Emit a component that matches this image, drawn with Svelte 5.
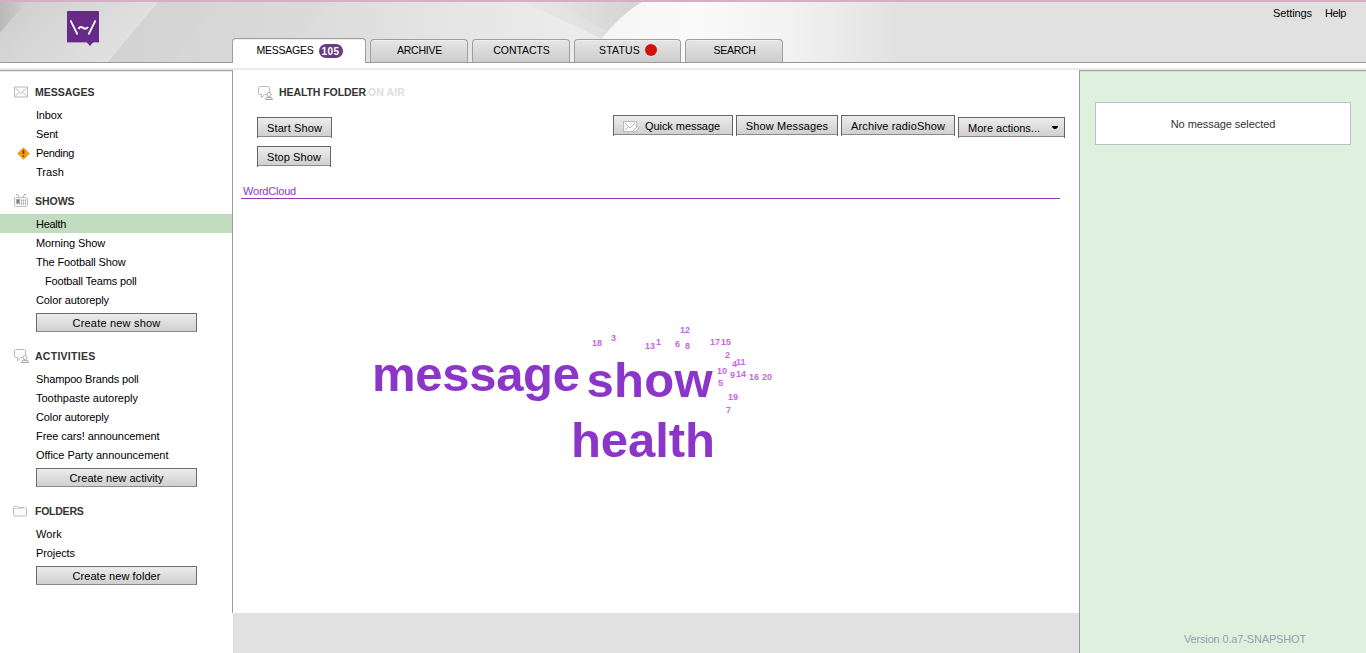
<script>
  const sections = [
    {
      title: 'MESSAGES', icon: 'mail', tw: 59.5,
      rows: [
        { t: 'Inbox', w: 26 }, { t: 'Sent', w: 22 },
        { t: 'Pending', w: 38, warn: true }, { t: 'Trash', w: 28 }
      ]
    },
    {
      title: 'SHOWS', icon: 'radio', tw: 39.5, button: 'Create new show', bw: 88,
      rows: [
        { t: 'Health', w: 30, active: true }, { t: 'Morning Show', w: 69 },
        { t: 'The Football Show', w: 89.5 }, { t: 'Football Teams poll', w: 91.5, sub: true },
        { t: 'Color autoreply', w: 73 }
      ]
    },
    {
      title: 'ACTIVITIES', icon: 'chat', tw: 60.5, button: 'Create new activity', bw: 94,
      rows: [
        { t: 'Shampoo Brands poll', w: 102.5 }, { t: 'Toothpaste autoreply', w: 102 },
        { t: 'Color autoreply', w: 73 }, { t: 'Free cars! announcement', w: 123.5 },
        { t: 'Office Party announcement', w: 132.5 }
      ]
    },
    {
      title: 'FOLDERS', icon: 'folder', tw: 48.5, button: 'Create new folder', bw: 88,
      rows: [{ t: 'Work', w: 26 }, { t: 'Projects', w: 39 }]
    }
  ];

  const tabs = [
    { t: 'MESSAGES', w: 57, width: 134, badge: '105', active: true },
    { t: 'ARCHIVE', w: 45, width: 98 },
    { t: 'CONTACTS', w: 56.5, width: 98 },
    { t: 'STATUS', w: 41, width: 107, dot: true },
    { t: 'SEARCH', w: 42, width: 98 }
  ];

  const big = [
    { t: 'message', x: 139, y: 192, w: 208 },
    { t: 'show', x: 353.5, y: 198, w: 126 },
    { t: 'health', x: 338, y: 258, w: 144 }
  ];
  const small = [
    ['18', 359, 147], ['3', 378, 142], ['13', 412, 150], ['1', 423, 146],
    ['12', 447, 134], ['6', 442, 148], ['8', 452, 150], ['17', 477, 146],
    ['15', 488, 146], ['2', 492, 159], ['4', 499, 168], ['11', 503, 166],
    ['10', 484, 175], ['9', 497, 179], ['14', 503, 178], ['16', 516, 181],
    ['20', 529, 181], ['5', 485, 187], ['19', 495, 201], ['7', 493, 214]
  ];

  // Spreads letters evenly so that a label takes up its set width.
  function fit(node, width) {
    const natural = node.getBoundingClientRect().width;
    const gap = (width - natural) / node.textContent.length;
    node.style.letterSpacing = gap.toFixed(3) + 'px';
  }
</script>

{#snippet icon(name)}
  {#if name === 'mail'}
    <svg width="16" height="16" viewBox="0 0 16 16" fill="none">
      <rect x="1.500" y="3" width="13" height="10" fill="#fafafa" stroke="#b9b9b9" />
      <path d="M3 4.500l5 5 5-5M3 11.500l3-3M13 11.500l-3-3" stroke="#b9b9b9" />
    </svg>
  {:else if name === 'radio'}
    <svg width="16" height="16" viewBox="0 0 16 16" fill="none">
      <path d="M4 1l2.500 3.500M12 1l-2.500 3.500M3 1.500h1.500M11.500 1.500h1.500" stroke="#aaa" />
      <rect x="1.500" y="4.500" width="13" height="9" rx="1" fill="#f4f4f4" stroke="#c3c3c3" />
      <rect x="3" y="6" width="4" height="5" fill="#aaa" /><path d="M5 7v3" stroke="#555" />
      <path d="M8 7.500h5M8 10.500h5" stroke="#a0a0a0" stroke-width="2" stroke-dasharray="1 1" />
    </svg>
  {:else if name === 'chat'}
    <svg width="17" height="16" viewBox="0 0 17 16" fill="none">
      <path d="M2.500 1.500h9q1 0 1 1v7h-5l-3 3.500v-3.500h-2q-1 0-1-1v-6q0-1 1-1z" fill="#fcfcfc" stroke="#bababa" />
      <circle cx="12" cy="9.500" r="2" fill="#fff" stroke="#b0b0b0" />
      <path d="M8.500 14.500l1.500-2.500 2 .800 2-.800 1.500 2.500z" fill="#fff" stroke="#a5a5a5" />
    </svg>
  {:else}
    <svg width="16" height="16" viewBox="0 0 16 16" fill="none">
      <path d="M.500 11.500v-7q0-1 1-1h3l1 1h7q1 0 1 1v6.500q0 1-1 1h-11q-1 0-1-1.500z" fill="#fbfbfb" stroke="#bcbcbc" />
      <path d="M1 5.500h9l1-1h2" stroke="#d5d5d5" />
    </svg>
  {/if}
{/snippet}

<div class="page">
  <header>
    <svg class="art" width="900" height="60" viewBox="0 2 900 60" aria-hidden="true">
      <defs>
        <linearGradient id="base"><stop offset="0" stop-color="#cfcfcf" /><stop offset=".25" stop-color="#d6d6d6" /><stop offset=".5" stop-color="#e5e5e5" /><stop offset=".78" stop-color="#f3f3f3" /><stop offset="1" stop-color="#e1e1e1" /></linearGradient>
        <linearGradient id="band" x2="1" y2=".4"><stop offset="0" stop-color="#cecece" /><stop offset="1" stop-color="#e2e2e2" /></linearGradient>
        <linearGradient id="glow"><stop offset="0" stop-color="#f5f5f5" /><stop offset=".35" stop-color="#fafafa" /><stop offset=".65" stop-color="#f2f2f2" /><stop offset="1" stop-color="#e1e1e1" /></linearGradient>
        <linearGradient id="corner" x2="1"><stop offset="0" stop-color="#b9b9b9" /><stop offset="1" stop-color="#d0d0d0" /></linearGradient>
        <linearGradient id="shade"><stop offset="0" stop-color="#e9e9e9" /><stop offset="1" stop-color="#d3d3d3" /></linearGradient>
      </defs>
      <rect y="2" width="900" height="60" fill="url(#base)" />
      <path d="M0 2h27L0 33z" fill="url(#corner)" />
      <path d="M27 2h131l-50 60H0V33z" fill="url(#band)" />
      <path d="M218 2h120L260 62h-90z" fill="#dadada" opacity=".35" />
      <path d="M525 2h117q-22 13-40 37z" fill="url(#shade)" />
      <path d="M525 2l77 37 5-7-50-30z" fill="#e4e4e4" opacity=".6" />
      <path d="M642 2h258v60H587q20-38 55-60z" fill="url(#glow)" />
    </svg>
    <div class="logo">
      <svg width="33" height="36" viewBox="0 0 33 36">
        <path d="M0 31h32v1h-32z" fill="#b996c9" />
        <path d="M1 0h30q1 0 1 1v30h-5.500l-3.500 4-3.500-4H0V1q0-1 1-1z" fill="#682a87" />
        <path d="M3.500 9.500l7 14M28.500 9.500l-7 14" stroke="#fff" stroke-width="1.700" fill="none" />
        <path d="M11.500 18q1.500-3 4-1.500l2 1q1.800.800 3.500-1.500" stroke="#fff" stroke-width="2" fill="none" />
      </svg>
    </div>
    <nav class="tabs">
      {#each tabs as tab}
        <div class="tab" class:active={tab.active} style:width="{tab.width}px">
          <span use:fit={tab.w}>{tab.t}</span>
          {#if tab.badge}<b class="badge">{tab.badge}</b>{/if}
          {#if tab.dot}<i class="dot"></i>{/if}
        </div>
      {/each}
    </nav>
    <div class="links"><span use:fit={39}>Settings</span><span use:fit={21}>Help</span></div>
  </header>
  <div class="strip"></div>

  <div class="body">
    <aside class="side">
      {#each sections as s}
        <section>
          <h3><span class="ico">{@render icon(s.icon)}</span><span use:fit={s.tw}>{s.title}</span></h3>
          {#each s.rows as r}
            <div class="row" class:on={r.active} class:sub={r.sub}>
              {#if r.warn}
                <svg class="warn" width="13" height="13" viewBox="0 0 13 13">
                  <path d="M6.500 .800L12.200 6.500 6.500 12.200 .800 6.500z" fill="#f90" stroke="#c9a06a" stroke-linejoin="round" />
                  <path d="M6.500 3v4M6.500 8.300v1.500" stroke="#5d3a08" stroke-width="1.500" />
                </svg>
              {/if}
              <span use:fit={r.w}>{r.t}</span>
            </div>
          {/each}
          {#if s.button}<button class="create"><span use:fit={s.bw}>{s.button}</span></button>{/if}
        </section>
      {/each}
    </aside>

    <div class="middle">
      <main>
        <div class="title">
          {@render icon('chat')}
          <b use:fit={87}>HEALTH FOLDER</b><span class="air" use:fit={37}>ON AIR</span>
        </div>
        <div class="controls">
          <div class="showctl">
            <button class="btn" style:width="75px"><span use:fit={55}>Start Show</span></button>
            <button class="btn" style:width="74px"><span use:fit={54}>Stop Show</span></button>
          </div>
          <div class="tools">
            <button class="btn quickbtn" style:width="120px">
              <svg class="quick" width="17" height="13" viewBox="0 0 17 13" fill="none">
                <rect x=".500" y="1.500" width="13" height="10" fill="#fafafa" stroke="#bbb" />
                <path d="M2 3l5 5 5-5M2 10l3-3" stroke="#b9b9b9" />
                <path d="M9.500 11.500l5-5 1.500 1.500-4 4z" fill="#fff" stroke="#b3b3b3" />
              </svg>
              <span use:fit={75}>Quick message</span>
            </button>
            <button class="btn" style:width="102px"><span use:fit={82.5}>Show Messages</span></button>
            <button class="btn" style:width="114px"><span use:fit={94}>Archive radioShow</span></button>
            <button class="btn more" style:width="107px">
              <span use:fit={72}>More actions...</span>
              <svg width="6" height="3" viewBox="0 0 6 3"><path d="M0 0h6v1L4 3H2L0 1z" fill="#000" /></svg>
            </button>
          </div>
        </div>
        <div class="cloudhead"><span use:fit={53}>WordCloud</span></div>
        <svg class="cloud" width="846" height="414" viewBox="0 0 846 414">
          {#each big as w}
            <text class="big" x={w.x} y={w.y} textLength={w.w}>{w.t}</text>
          {/each}
          {#each small as [t, x, y]}
            <text class="small" {x} {y}>{t}</text>
          {/each}
        </svg>
      </main>
    </div>

    <aside class="detail">
      <div class="none"><span use:fit={104.5}>No message selected</span></div>
      <div class="version"><span use:fit={122}>Version 0.a7-SNAPSHOT</span></div>
    </aside>
  </div>
</div>

<style>
  :global(body) { margin: 0; background: #fff; }
  .page {
    width: 1366px; height: 653px; overflow: hidden; display: flex; flex-direction: column;
    font: 11px/19px "Liberation Sans", Arial, sans-serif; color: #000; white-space: nowrap;
  }
  svg { display: block; flex: none; }
  header {
    position: relative; box-sizing: border-box; height: 63px; flex: none; display: flex;
    background: #e1e1e1; border-top: 2px solid #d8aec7; border-bottom: 1px solid #9a9a9a;
  }
  .art { position: absolute; left: 0; top: 0; }
  .logo { position: relative; width: 165px; padding: 9px 0 0 67px; }
  .tabs { position: relative; display: flex; align-items: flex-end; gap: 4px; font-size: 10.5px; }
  .tab {
    box-sizing: border-box; height: 23px; display: flex; align-items: center; justify-content: center;
    padding: 0 0 2px 1px;
    border: 1px solid #9e9e9e; border-bottom: 0; border-radius: 4px 4px 0 0;
    background: linear-gradient(#e6e6e6, #cdcdcd); box-shadow: inset 0 1px #eee;
  }
  .tab.active { height: 25px; background: #fff; margin-bottom: -1px; padding-bottom: 1px; }
  .badge {
    margin-left: 5px; width: 24px; height: 14px; border-radius: 7px; background: #673c80;
    color: #fff; font-size: 10px; line-height: 15px; text-align: center; letter-spacing: .5px;
  }
  .dot { width: 12px; height: 12px; margin: 0 0 0 5px; border-radius: 50%; background: #d60f0f; box-shadow: 0 1px #e8e8e8; }
  .links { position: relative; margin-left: auto; display: flex; gap: 13px; padding: 2px 20px 0 0; }
  .strip { height: 7px; flex: none; background: linear-gradient(#fff 5px, #eaeaea 5px); }

  .body { flex: 1; min-height: 0; display: flex; }
  .side {
    box-sizing: border-box; width: 233px; height: 543px; padding-top: 8px;
    border-top: 1px solid #a0a0a0; border-right: 1px solid #999;
    box-shadow: inset 0 1px #eee;
  }
  section { margin-bottom: 11px; }
  section:first-child { margin-bottom: 7px; }
  h3 { margin: 0; height: 26px; display: flex; align-items: center; font-size: 10.5px; line-height: 26px; color: #333; }
  .ico { width: 22px; padding-left: 13px; }
  .row { box-sizing: border-box; height: 19px; padding: 2px 0 0 36px; display: flex; align-items: center; }
  .row.on { background: #c1dcbe; }
  .row.sub { padding-left: 45px; }
  .warn { margin: 0 6px 0 -19px; }
  button { margin: 0; padding: 0; font: inherit; color: #000; box-sizing: border-box; border-radius: 0; }
  .create {
    display: block; width: 161px; height: 19px; margin: 4px 0 0 36px; line-height: 18px;
    border: 1px solid #6c6c6c; border-bottom-color: #8a8a8a; background: linear-gradient(#ececec, #d0d0d0);
  }

  .middle { width: 846px; background: #e1e1e1; }
  main { height: 543px; background: #fff; }
  .title { display: flex; align-items: center; padding: 13px 0 0 24px; height: 19px; font-size: 10.5px; color: #333; }
  .title b { margin-left: 5px; }
  .air { margin-left: 2px; color: #dedede; font-weight: bold; }
  .controls { display: flex; justify-content: space-between; padding: 13px 14px 0 24px; }
  .showctl { display: flex; flex-direction: column; gap: 8px; padding-top: 2px; }
  .tools { display: flex; align-items: flex-start; gap: 3px; }
  .btn {
    height: 21px; display: flex; align-items: center; justify-content: center; line-height: 21px;
    border: solid #666; border-width: 1px 1px 0;
    background: linear-gradient(#8a8a8a, #8a8a8a) 0 18px / 100% 1px no-repeat,
      linear-gradient(#ececec, #d0d0d0) 0 0 / 100% 18px no-repeat #fff;
  }
  .quickbtn { padding-right: 3px; }
  .quick { margin-right: 5px; }
  .more { margin-top: 2px; padding: 0 6px 0 9px; justify-content: space-between; }
  .more svg { margin-top: -2px; }
  .cloudhead { box-sizing: border-box; width: 819px; height: 18px; margin: 14px 0 0 8px; padding: 1px 0 0 2px; line-height: 19px; color: #8c38c8; border-bottom: 1px solid #8c3cba; }
  .cloud { position: relative; }
  .big { font: bold 49px "Liberation Sans", Arial, sans-serif; fill: #8c36c9; }
  .small { font: bold 9px "Liberation Sans", Arial, sans-serif; fill: #c868e0; }

  .detail {
    box-sizing: border-box; width: 287px; padding: 31px 15px 4px; display: flex; flex-direction: column;
    background: #dff0de; border-left: 1px solid #999; border-top: 1px solid #a49fa0;
    box-shadow: inset 0 1px #dcdcd8;
  }
  .none { box-sizing: border-box; height: 43px; padding-top: 1px; background: #fff; border: 1px solid #b6c4cc; color: #333; display: flex; align-items: center; justify-content: center; }
  .version { margin-top: auto; padding-right: 45px; text-align: right; color: #9a9db0; }
</style>
